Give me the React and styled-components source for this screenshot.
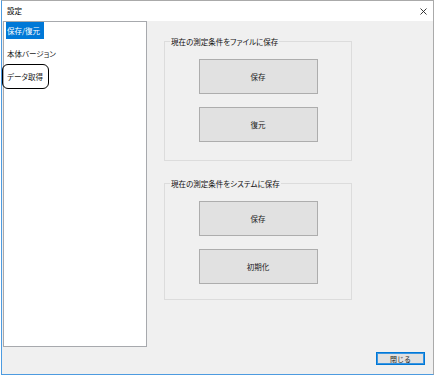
import React from 'react';
import styled, { createGlobalStyle } from 'styled-components';

const Global = createGlobalStyle`
  html, body { margin: 0; padding: 0; background: #ffffff; }
  body {
    font-family: "Noto Sans CJK JP", "Noto Sans", sans-serif;
    font-feature-settings: "palt";
  }
  * { box-sizing: border-box; }
`;

const Window = styled.div`
  margin-left: 1px;
  width: 433px;
  height: 375px;
  display: flex;
  flex-direction: column;
  background: #f0f0f0;
  border-top: 1px solid #aaaaaa;
  border-right: 1px solid #aaaaaa;
  border-left: 1px solid #4d9be0;
  border-bottom: 1px solid #4d9be0;
`;

const TitleBar = styled.div`
  height: 20px;
  flex: none;
  background: #ffffff;
  display: flex;
  align-items: center;
  justify-content: space-between;
  padding: 0 6px 0 5px;
`;

const Title = styled.span`
  font-size: 7.5px;
  line-height: 10px;
  color: #000;
`;

const CloseX = styled.svg`
  display: block;
  margin-top: 1px;
`;

const Body = styled.div`
  flex: 1;
  display: flex;
  flex-direction: column;
  padding: 0 8px 9px 1px;
`;

const Main = styled.div`
  display: flex;
  align-items: flex-start;
  gap: 17px;
`;

const List = styled.div`
  width: 144px;
  height: 326px;
  flex: none;
  background: #ffffff;
  border: 1px solid #a7a9ad;
  padding: 0 0 0 2px;
  display: flex;
  flex-direction: column;
  align-items: flex-start;
  gap: 6px;
`;

const Item = styled.span`
  position: relative;
  height: 17px;
  line-height: 17px;
  padding: ${p => (p.$selected ? '0 4px 0 1px' : '0 2px 0 1px')};
  font-size: 7.5px;
  color: ${p => (p.$selected ? '#ffffff' : '#1a1a1a')};
  background: ${p => (p.$selected ? '#0078d7' : 'transparent')};

  ${p => p.$annotated && `
    &::after {
      content: "";
      position: absolute;
      top: -4px;
      bottom: -4px;
      left: -4px;
      right: -4px;
      border: 1.3px solid #000;
      border-radius: 6px;
    }
  `}
`;

const Content = styled.div`
  display: flex;
  flex-direction: column;
  gap: 17px;
  padding-top: 15px;
`;

const Group = styled.fieldset`
  margin: 0;
  width: 188px;
  border: 1px solid #dcdcdc;
  padding: 12px 0 ${p => p.$padBottom}px;
  display: flex;
  flex-direction: column;
  align-items: center;
  gap: 13px;
  min-width: 0;
`;

const Legend = styled.legend`
  font-size: 7.5px;
  line-height: 11px;
  padding: 0 1px;
  margin-left: 5px;
  color: #111;
`;

const Button = styled.button`
  width: 119px;
  height: 35px;
  margin: 0;
  padding: 0;
  background: #e1e1e1;
  border: 1px solid #adadad;
  font-family: inherit;
  font-size: 7.5px;
  color: #222;
`;

const Footer = styled.div`
  display: flex;
  justify-content: flex-end;
  margin-top: 5px;
`;

const CloseButton = styled.button`
  width: 49px;
  height: 13px;
  margin: 0;
  padding: 0;
  background: #e1e1e1;
  border: 1px solid #0078d7;
  box-shadow: inset 0 0 0 1px #3a95e0;
  font-family: inherit;
  font-size: 7px;
  line-height: 10px;
  color: #222;
`;

export default function App() {
  return (
    <>
      <Global />
      <Window>
        <TitleBar>
          <Title>設定</Title>
          <CloseX width="7" height="7" viewBox="0 0 7 7">
            <path d="M0.5 0.5 L6.5 6.5 M6.5 0.5 L0.5 6.5" stroke="#222" strokeWidth="0.9" fill="none" />
          </CloseX>
        </TitleBar>
        <Body>
          <Main>
            <List>
              <Item $selected>保存/復元</Item>
              <Item>本体バージョン</Item>
              <Item $annotated>データ取得</Item>
            </List>
            <Content>
              <Group $padBottom={18}>
                <Legend>現在の測定条件をファイルに保存</Legend>
                <Button>保存</Button>
                <Button>復元</Button>
              </Group>
              <Group $padBottom={15}>
                <Legend>現在の測定条件をシステムに保存</Legend>
                <Button>保存</Button>
                <Button>初期化</Button>
              </Group>
            </Content>
          </Main>
          <Footer>
            <CloseButton>閉じる</CloseButton>
          </Footer>
        </Body>
      </Window>
    </>
  );
}
